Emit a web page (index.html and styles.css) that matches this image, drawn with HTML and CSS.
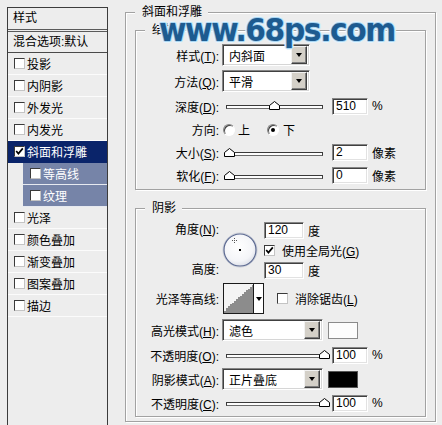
FILE: index.html
```html
<!DOCTYPE html>
<html>
<head>
<meta charset="utf-8">
<link rel="stylesheet" href="styles.css">
</head>
<body>
<div class="dialog">
  <div class="sidebar">
    <div class="sb-head">样式</div>
    <div class="sb-blend">混合选项:默认</div>
    <div class="sb-item"><span class="cb"></span>投影</div>
    <div class="sb-item"><span class="cb"></span>内阴影</div>
    <div class="sb-item"><span class="cb"></span>外发光</div>
    <div class="sb-item"><span class="cb"></span>内发光</div>
    <div class="sb-item sel"><span class="cb"><svg width="9" height="9" viewBox="0 0 9 9"><polyline points="1.2,4 3.4,6.6 7.8,1.4" fill="none" stroke="#000" stroke-width="1.7"/></svg></span>斜面和浮雕</div>
    <div class="sb-item sub"><span class="cb"></span>等高线</div>
    <div class="sb-item sub"><span class="cb"></span>纹理</div>
    <div class="sb-item"><span class="cb"></span>光泽</div>
    <div class="sb-item"><span class="cb"></span>颜色叠加</div>
    <div class="sb-item"><span class="cb"></span>渐变叠加</div>
    <div class="sb-item"><span class="cb"></span>图案叠加</div>
    <div class="sb-item"><span class="cb"></span>描边</div>
  </div>

  <div class="main">
    <fieldset class="grp outer">
      <legend>斜面和浮雕</legend>

      <fieldset class="grp inner struct">
        <legend>结构</legend>
        <div class="row h26">
          <span class="lbl">样式(<u>T</u>):</span>
          <div class="select w88"><span class="sel-text">内斜面</span><span class="sel-btn"><i class="tri"></i></span></div>
        </div>
        <div class="row h26">
          <span class="lbl">方法(<u>Q</u>):</span>
          <div class="select w88"><span class="sel-text">平滑</span><span class="sel-btn"><i class="tri"></i></span></div>
        </div>
        <div class="row h24">
          <span class="lbl">深度(<u>D</u>):</span>
          <div class="slider"><div class="track"></div><svg class="thumb" style="left:43px" width="11" height="9" viewBox="0 0 11 9"><polygon points="0.5,8.5 0.5,4.5 5.5,0.5 10.5,4.5 10.5,8.5" fill="#fff" stroke="#000"/></svg></div>
          <span class="field w36">510</span><span class="unit">%</span>
        </div>
        <div class="row h23">
          <span class="lbl">方向:</span>
          <span class="radio r1"></span><span class="rtext">上</span>
          <span class="radio r2 on"><i></i></span><span class="rtext">下</span>
        </div>
        <div class="row h23">
          <span class="lbl">大小(<u>S</u>):</span>
          <div class="slider"><div class="track"></div><svg class="thumb" style="left:-2px" width="11" height="9" viewBox="0 0 11 9"><polygon points="0.5,8.5 0.5,4.5 5.5,0.5 10.5,4.5 10.5,8.5" fill="#fff" stroke="#000"/></svg></div>
          <span class="field w36">2</span><span class="unit">像素</span>
        </div>
        <div class="row h23">
          <span class="lbl">软化(<u>F</u>):</span>
          <div class="slider"><div class="track"></div><svg class="thumb" style="left:-2px" width="11" height="9" viewBox="0 0 11 9"><polygon points="0.5,8.5 0.5,4.5 5.5,0.5 10.5,4.5 10.5,8.5" fill="#fff" stroke="#000"/></svg></div>
          <span class="field w36">0</span><span class="unit">像素</span>
        </div>
      </fieldset>

      <fieldset class="grp inner shade">
        <legend>阴影</legend>
        <div class="angle-block">
          <div class="lblcol"><span>角度(<u>N</u>):</span><span>高度:</span></div>
          <svg class="dial" width="36" height="36" viewBox="0 0 36 36">
            <defs>
              <radialGradient id="dg" cx="45%" cy="40%" r="60%">
                <stop offset="0" stop-color="#ffffff"/>
                <stop offset="0.75" stop-color="#f4f5f8"/>
                <stop offset="1" stop-color="#dfe2ea"/>
              </radialGradient>
            </defs>
            <circle cx="18" cy="18" r="17" fill="none" stroke="#c9cdd8" stroke-width="1"/>
            <circle cx="18" cy="18" r="16" fill="url(#dg)" stroke="#5a6890" stroke-width="1.2"/>
            <path d="M10 8.5h5M12.5 6v5" stroke="#555" stroke-width="1" stroke-dasharray="1 1"/>
            <rect x="17" y="17" width="2" height="2" fill="#000"/>
          </svg>
          <div class="ctrlcol">
            <div class="c18"><span class="field w40">120</span><span class="unit">度</span></div>
            <div class="c22"><span class="cb on"><svg width="9" height="9" viewBox="0 0 9 9"><polyline points="1.2,4 3.4,6.6 7.8,1.4" fill="none" stroke="#000" stroke-width="1.7"/></svg></span><span class="cbtext">使用全局光(<u>G</u>)</span></div>
            <div class="c18"><span class="field w40">30</span><span class="unit">度</span></div>
          </div>
        </div>
        <div class="row contour-row">
          <span class="lbl">光泽等高线:</span>
          <div class="contour">
            <svg class="curve" width="29" height="29" viewBox="0 0 29 29">
              <rect width="29" height="29" fill="#f4f4f4"/>
              <polygon points="0,29 0,27 2,27 2,24 4,24 4,22 6,22 6,20 8,20 8,19 10,19 10,17 12,17 12,15 14,15 14,13 16,13 16,12 18,12 18,10 20,10 20,8 22,8 22,6 24,6 24,5 26,5 26,3 28,3 28,1 29,1 29,29" fill="#8c8c8c"/>
            </svg>
            <span class="cbtn"><i class="tri"></i></span>
          </div>
          <span class="cb aa"></span><span class="cbtext">消除锯齿(<u>L</u>)</span>
        </div>
        <div class="row h26">
          <span class="lbl">高光模式(<u>H</u>):</span>
          <div class="select w101"><span class="sel-text">滤色</span><span class="sel-btn"><i class="tri"></i></span></div>
          <span class="swatch white"></span>
        </div>
        <div class="row h24">
          <span class="lbl">不透明度(<u>O</u>):</span>
          <div class="slider"><div class="track"></div><svg class="thumb" style="left:93px" width="11" height="9" viewBox="0 0 11 9"><polygon points="0.5,8.5 0.5,4.5 5.5,0.5 10.5,4.5 10.5,8.5" fill="#fff" stroke="#000"/></svg></div>
          <span class="field w36">100</span><span class="unit">%</span>
        </div>
        <div class="row h24">
          <span class="lbl">阴影模式(<u>A</u>):</span>
          <div class="select w101"><span class="sel-text">正片叠底</span><span class="sel-btn"><i class="tri"></i></span></div>
          <span class="swatch black"></span>
        </div>
        <div class="row h24">
          <span class="lbl">不透明度(<u>C</u>):</span>
          <div class="slider"><div class="track"></div><svg class="thumb" style="left:93px" width="11" height="9" viewBox="0 0 11 9"><polygon points="0.5,8.5 0.5,4.5 5.5,0.5 10.5,4.5 10.5,8.5" fill="#fff" stroke="#000"/></svg></div>
          <span class="field w36">100</span><span class="unit">%</span>
        </div>
      </fieldset>
    </fieldset>
    <div class="watermark">www.68ps.com</div>
  </div>
</div>
</body>
</html>
```

FILE: styles.css
```css
html, body {
  margin: 0;
  padding: 0;
}
body {
  width: 442px;
  height: 425px;
  overflow: hidden;
  background: #ededed;
  font-family: "Liberation Sans", "Noto Sans CJK SC", sans-serif;
  font-size: 12px;
  color: #000;
}
u { text-decoration: underline; text-underline-offset: 1px; }

.dialog {
  display: flex;
  align-items: flex-start;
  padding-left: 7px;
  gap: 17px;
}

/* ---------- sidebar ---------- */
.sidebar {
  margin-top: 7px;
  width: 101px;
  height: 430px;
  box-sizing: border-box;
  border: 1px solid #3c3c3c;
  background: #ededed;
  flex: none;
}
.sb-head {
  height: 21px;
  line-height: 21px;
  padding-left: 5px;
  border-bottom: 3px double #5a5a5a;
}
.sb-blend {
  height: 20px;
  line-height: 20px;
  padding-left: 5px;
  border-bottom: 1px solid #4a4a4a;
}
.sb-item {
  height: 21px;
  display: flex;
  align-items: center;
  padding-left: 6px;
  border-bottom: 1px solid #fbfbfb;
}
.sb-item .cb { margin-right: 2px; }
.sb-item.sel {
  background: #0a246a;
  color: #fff;
  border-bottom-color: #0a246a;
}
.sb-item.sub {
  margin-left: 15px;
  padding-left: 7px;
  background: #7684a8;
  color: #fff;
  border-bottom-color: #e6e9f0;
}

.cb {
  width: 11px;
  height: 11px;
  box-sizing: border-box;
  border: 1px solid;
  border-color: #3a3a3a #c4c4c4 #c4c4c4 #3a3a3a;
  background: #fff;
  display: inline-flex;
  align-items: center;
  justify-content: center;
  flex: none;
}
.cb svg { display: block; }

/* ---------- main groups ---------- */
.main {
  position: relative;
  flex: none;
}
fieldset.grp {
  margin: 0;
  min-width: 0;
  border: 1px solid #a2a2a2;
  box-shadow: inset 1px 1px 0 #ffffff, 1px 1px 0 #ffffff;
}
fieldset.grp > legend {
  padding: 0 6px 0 7px;
  line-height: 16px;
  background: #ededed;
}
.outer {
  margin-top: 4px !important;
  width: 311px;
  box-sizing: border-box;
  padding: 0 9px 4px 9px;
}
.inner {
  padding: 0;
}
.inner > legend { margin-left: 9px; }
.struct {
  margin-top: 2px !important;
  padding: 4px 0 2px 0;
}
.shade {
  margin-top: 10px !important;
  padding: 5px 0 1px 0;
}

.row {
  display: flex;
  align-items: center;
}
.h26 { height: 26px; }
.h24 { height: 24px; }
.h23 { height: 23px; }
.lbl {
  width: 83px;
  text-align: right;
  flex: none;
  white-space: nowrap;
}

/* select */
.select {
  margin-left: 3px;
  height: 22px;
  box-sizing: border-box;
  border: 1px solid;
  border-color: #858585 #ffffff #ffffff #858585;
  box-shadow: inset 1px 1px 0 #404040, inset -1px -1px 0 #d6d6d6;
  background: #fff;
  display: flex;
  align-items: center;
  padding: 2px;
}
.w88 { width: 88px; }
.w101 { width: 101px; }
.sel-text {
  flex: 1;
  padding-left: 4px;
  white-space: nowrap;
}
.sel-btn {
  width: 16px;
  height: 18px;
  box-sizing: border-box;
  background: #d4d0c8;
  border: 1px solid;
  border-color: #f2f2f2 #404040 #404040 #f2f2f2;
  box-shadow: inset -1px -1px 0 #808080;
  display: flex;
  align-items: center;
  justify-content: center;
  flex: none;
}
.tri {
  display: block;
  width: 0;
  height: 0;
  border-left: 3.5px solid transparent;
  border-right: 3.5px solid transparent;
  border-top: 4px solid #000;
}

/* slider */
.slider {
  position: relative;
  margin-left: 7px;
  width: 97px;
  height: 10px;
  flex: none;
}
.track {
  margin-top: 4px;
  height: 4px;
  box-sizing: border-box;
  border: 1px solid #3a3a3a;
  border-bottom-color: #6a6a6a;
  background: #fdfdfd;
}
.thumb {
  position: absolute;
  top: 0;
  display: block;
}

/* fields */
.field {
  height: 17px;
  box-sizing: border-box;
  border: 1px solid;
  border-color: #858585 #ffffff #ffffff #858585;
  box-shadow: inset 1px 1px 0 #404040, inset -1px -1px 0 #e2e2e2;
  background: #fff;
  line-height: 15px;
  padding-left: 3px;
  flex: none;
}
.row .field { margin-left: 9px; }
.w36 { width: 36px; }
.w40 { width: 40px; }
.unit { margin-left: 4px; white-space: nowrap; }

/* radios */
.radio {
  width: 12px;
  height: 12px;
  box-sizing: border-box;
  border-radius: 50%;
  border: 1px solid;
  border-color: #858585 #ffffff #ffffff #858585;
  box-shadow: inset 1px 1px 0 #404040;
  background: #fff;
  display: flex;
  align-items: center;
  justify-content: center;
  flex: none;
}
.radio.on i {
  display: block;
  width: 4px;
  height: 4px;
  border-radius: 50%;
  background: #000;
}
.r1 { margin-left: 4px; }
.r2 { margin-left: 17px; }
.rtext { margin-left: 3px; }
.r2 + .rtext { margin-left: 4px; }

/* angle block */
.angle-block {
  display: flex;
  align-items: center;
  height: 58px;
}
.lblcol {
  width: 83px;
  height: 58px;
  display: flex;
  flex-direction: column;
  justify-content: space-between;
  align-items: flex-end;
  line-height: 18px;
  flex: none;
}
.dial {
  margin-left: 3px;
  display: block;
  flex: none;
}
.ctrlcol {
  margin-left: 6px;
  display: flex;
  flex-direction: column;
}
.c18 { height: 18px; display: flex; align-items: center; }
.c22 { height: 22px; display: flex; align-items: center; }
.cbtext { margin-left: 7px; white-space: nowrap; }

/* contour */
.contour-row {
  margin-top: 4px;
  height: 31px;
}
.contour {
  margin-left: 4px;
  width: 41px;
  height: 31px;
  box-sizing: border-box;
  border: 1px solid #1a1a1a;
  display: flex;
  background: #fff;
  flex: none;
}
.curve { display: block; flex: none; }
.cbtn {
  flex: 1;
  border-left: 1px solid #1a1a1a;
  display: flex;
  align-items: center;
  justify-content: center;
  background: #fff;
}
.cb.aa { margin-left: 13px; }

/* swatches */
.swatch {
  margin-left: 5px;
  width: 30px;
  height: 17px;
  box-sizing: border-box;
  border: 1px solid #8a8a8a;
  flex: none;
}
.swatch.white { background: #fcfcfc; }
.swatch.black { background: #000; border-color: #555; }

.contour-row + .h26 { margin-top: 3px; }

/* watermark */
.watermark {
  position: absolute;
  left: 34px;
  top: 13px;
  font-family: "DejaVu Sans", sans-serif;
  font-weight: bold;
  font-size: 32px;
  letter-spacing: -1.5px;
  line-height: 34px;
  color: #1d5b90;
  transform: scaleX(0.93);
  transform-origin: 0 0;
  text-shadow:
    1px 0 0 #a9d6f2, -1px 0 0 #a9d6f2, 0 1px 0 #a9d6f2, 0 -1px 0 #a9d6f2,
    2px 0 0 #e6f4fc, -2px 0 0 #e6f4fc, 0 2px 0 #e6f4fc, 0 -2px 0 #e6f4fc,
    1px 1px 0 #cbe7f8, -1px -1px 0 #cbe7f8, 1px -1px 0 #cbe7f8, -1px 1px 0 #cbe7f8;
  white-space: nowrap;
}
```
